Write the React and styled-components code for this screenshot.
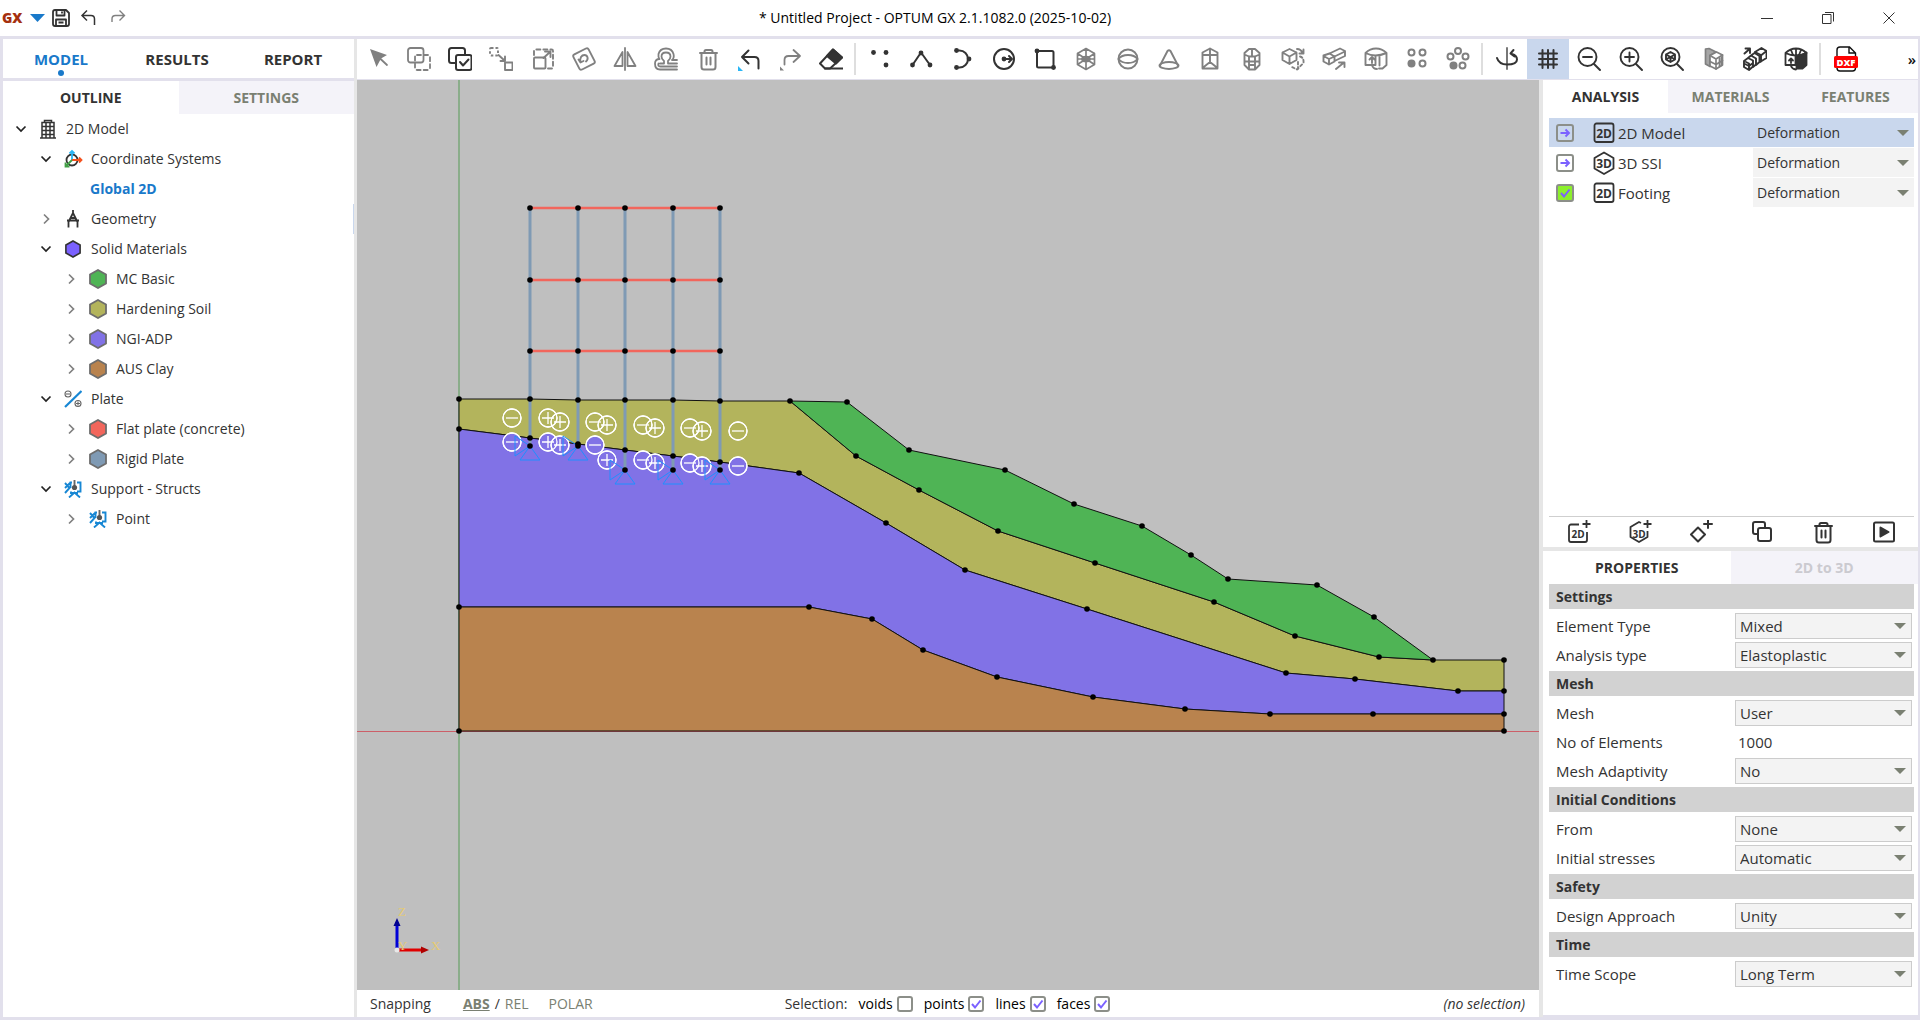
import React, { useState } from "react";
import styled, { createGlobalStyle, css } from "styled-components";

const c = {
  line: "#e2e0ec",
  split: "#e6e6e6",
  tab: "#f4f3f9",
  select: "#c9d7ed",
  ink: "#333333",
  gray: "#808080",
  olive: "#7a8072",
  blue: "#1979ca",
  violet: "#7b61ff",
  green: "#4fb455",
  yellow: "#b3b45c",
  purple: "#8172e6",
  brown: "#b9834e",
  red: "#f2665c",
  steel: "#7f9ab4",
};

const GlobalStyle = createGlobalStyle`
  *, *::before, *::after { box-sizing: border-box; }
  body { margin: 0; background: #fff; }
  body, button, input, select {
    font-family: "Open Sans", "Noto Sans", sans-serif;
    font-size: 15px;
    line-height: 20px;
    color: ${c.ink};
  }
  button { border: 0; padding: 0; background: none; cursor: pointer; }
`;

/* ---------- frame ---------- */

const Window = styled.div`
  display: flex;
  flex-direction: column;
  height: 100vh;
  min-height: 900px;
  min-width: 1500px;
`;

const TitleBar = styled.header`
  display: flex;
  align-items: center;
  height: 36px;
  flex: none;
`;

const QuickAccess = styled.div`
  display: flex;
  align-items: center;
  gap: 7px;
  min-width: 134px;
  padding: 0 2px;
`;

const Logo = styled.span`
  color: #a5300f;
  font-size: 14px;
  font-weight: 800;
`;

const IconButton = styled.button`
  display: grid;
  place-items: center;
  height: 30px;
  color: ${(p) => p.$color || c.ink};
  svg { display: block; }
`;

const QuickPair = styled.div`
  display: flex;
  gap: 14px;
  padding-left: 3px;
`;

const Title = styled.h1`
  flex: 1;
  margin: 0;
  text-align: center;
  font-size: 14px;
  font-weight: 400;
  color: #000;
`;

const WindowButtons = styled.div`
  display: grid;
  grid-template-columns: repeat(3, 61px);
  padding-right: 1px;
`;

const Body = styled.div`
  flex: 1;
  min-height: 0;
  display: grid;
  grid-template-columns: 351px 3px minmax(0, 1fr);
  padding: 3px 2px 3px 3px;
  background: ${c.line};
`;

const Splitter = styled.div`
  background: ${c.split};
`;

const SidePanel = styled.aside`
  background: #fff;
`;

const Work = styled.div`
  display: flex;
  flex-direction: column;
  min-width: 0;
  min-height: 0;
`;

const WorkRow = styled.div`
  flex: 1;
  min-height: 0;
  display: grid;
  grid-template-columns: minmax(0, 1fr) 4px 375px;
`;

const Center = styled.main`
  display: flex;
  flex-direction: column;
  min-height: 0;
`;

/* ---------- tabs ---------- */

const MainTabs = styled.div`
  display: grid;
  grid-template-columns: repeat(3, 1fr);
  padding-right: 3px;
  border-bottom: 3px solid ${c.line};
`;

const MainTab = styled.button`
  display: flex;
  flex-direction: column;
  align-items: center;
  justify-content: flex-end;
  height: 39px;
  padding-bottom: 2px;
  font-weight: 700;
  color: ${(p) => (p.$active ? c.blue : c.ink)};
  &::after {
    content: "";
    width: 6px;
    height: 6px;
    margin-top: 1px;
    border-radius: 50%;
    background: ${(p) => (p.$active ? c.blue : "transparent")};
  }
`;

const Tabs = styled.div`
  display: grid;
  grid-auto-flow: column;
  grid-auto-columns: 1fr;
`;

const Tab = styled.button`
  height: 33px;
  font-size: 14px;
  font-weight: 700;
  color: ${(p) => (p.$active ? c.ink : c.olive)};
  background: ${(p) => (p.$active ? "#fff" : c.tab)};
  &:disabled { color: #cbcad0; cursor: default; }
`;

/* ---------- outline tree ---------- */

const Tree = styled.ul`
  list-style: none;
  margin: 0;
  padding: 0;
`;

const TreeRow = styled.li`
  display: flex;
  align-items: center;
  height: 30px;
  padding-left: ${(p) => 10 + p.$level * 25}px;
  border-right: 1px solid ${(p) => (p.$marked ? c.select : "transparent")};
`;

const Chevron = styled.button`
  width: 16px;
  height: 20px;
  display: grid;
  place-items: center;
  color: ${(p) => (p.$open ? "#222" : c.gray)};
`;

const TreeIcon = styled.span`
  display: grid;
  place-items: center;
  width: 20px;
  margin: 0 7px 0 9px;
`;

const TreeLabel = styled.span`
  white-space: nowrap;
  font-size: 14px;
  padding-left: 1px;
  ${(p) =>
    p.$active &&
    css`
      padding-left: 52px;
      font-weight: 700;
      color: ${c.blue};
    `}
`;

/* ---------- toolbar ---------- */

const Toolbar = styled.div`
  display: flex;
  align-items: center;
  height: 41px;
  flex: none;
  background: #fff;
  border-bottom: 1px solid ${c.line};
`;

const ToolGroup = styled.div`
  display: grid;
  grid-template-columns: repeat(${(p) => p.$count}, 1fr);
  width: ${(p) => p.$width}px;
`;

const ToolButton = styled.button`
  display: grid;
  place-items: center;
  height: 40px;
  color: ${(p) => (p.$dim ? c.gray : c.ink)};
  background: ${(p) => (p.$active ? c.select : "none")};
`;

const Separator = styled.span`
  width: 2px;
  height: 32px;
  margin: 0 3px 0 2px;
  background: #dedede;
`;

const More = styled.button`
  margin-left: auto;
  width: 12px;
  font-weight: 600;
  color: #111;
`;

/* ---------- canvas and status ---------- */

const Viewport = styled.div`
  flex: 1;
  min-height: 0;
  background: #bfbfbf;
  overflow: hidden;
  svg { display: block; width: 100%; height: 100%; overflow: visible; }
`;

const StatusBar = styled.footer`
  display: grid;
  grid-template-columns: 1fr auto 1fr;
  align-items: center;
  height: 27px;
  flex: none;
  padding: 0 14px 0 13px;
  font-size: 14px;
  background: #fff;
`;

const StatusGroup = styled.div`
  display: flex;
  align-items: center;
  gap: ${(p) => p.$gap}px;
`;

const ModeButton = styled.button`
  font-size: 14px;
  color: ${c.olive};
  font-weight: ${(p) => (p.$active ? 700 : 400)};
  text-decoration: ${(p) => (p.$active ? "underline" : "none")};
`;

const CheckLabel = styled.label`
  display: flex;
  align-items: center;
  gap: 4px;
  color: #000;
`;

const CheckCell = styled.span`
  display: grid;
  place-items: center;
  justify-self: start;
  > * { grid-area: 1 / 1; }
  svg { pointer-events: none; }
`;

const CheckInput = styled.input`
  appearance: none;
  width: ${(p) => p.$size || 16}px;
  height: ${(p) => p.$size || 16}px;
  margin: 0;
  border: 2px solid #8c8f89;
  border-radius: 3px;
  background: ${(p) => p.$fill || "#fff"};
`;

const Hint = styled.em`
  justify-self: end;
  color: ${c.ink};
`;

/* ---------- right panel ---------- */

const RightPanel = styled.aside`
  display: flex;
  flex-direction: column;
  background: #fff;
  border-bottom: 2px solid ${c.line};
`;

const AnalysisList = styled.div`
  flex: none;
  height: 403px;
  padding: 5px 4px 0 6px;
`;

const AnalysisRow = styled.div`
  display: grid;
  grid-template-columns: 36px 24px 1fr 161px;
  align-items: center;
  height: 29px;
  margin-bottom: 1px;
  padding-left: 7px;
  background: ${(p) => (p.$active ? c.select : "transparent")};
`;

const AnalysisName = styled.span`
  padding-left: 2px;
`;

const SelectBox = styled.div`
  display: grid;
  grid-template-columns: 1fr 26px;
  align-items: center;
  height: ${(p) => (p.$plain ? 29 : 26)}px;
  border: ${(p) => (p.$plain ? "0" : "1px solid #cccccc")};
  background: ${(p) => (p.$active ? "transparent" : "#f3f3f3")};
  svg {
    grid-area: 1 / 2;
    justify-self: end;
    margin-right: 5px;
    pointer-events: none;
  }
`;

const SelectInput = styled.select`
  grid-area: 1 / 1 / 2 / 3;
  appearance: none;
  height: 100%;
  width: 100%;
  margin: 0;
  padding: 0 26px 0 4px;
  border: 0;
  border-radius: 0;
  background: transparent;
  font-size: ${(p) => (p.$plain ? 14 : 15)}px;
`;

const Actions = styled.div`
  display: grid;
  grid-template-columns: repeat(6, 1fr);
  height: 31px;
  margin: 0 4px 0 6px;
  border-top: 1px solid #cfcfcf;
`;

const Divider = styled.div`
  height: 4px;
  background: ${c.split};
`;

const Properties = styled.div`
  flex: 1;
  padding: 0 4px 0 6px;
`;

const SectionTitle = styled.h2`
  margin: 0;
  height: 25px;
  padding: 3px 7px 2px;
  font-size: 14px;
  font-weight: 700;
  background: #d2d2d2;
`;

const SectionBody = styled.div`
  padding: 2px 2px 2px 7px;
`;

const Field = styled.div`
  display: grid;
  grid-template-columns: 1fr 177px;
  align-items: center;
  height: 29px;
`;

const NumberInput = styled.input`
  width: 100%;
  border: 0;
  padding: 0 3px;
  background: transparent;
`;

/* ---------- drawings ---------- */

const Icon = ({ size = 24, w = 1.8, children }) => (
  <svg
    width={size}
    height={size}
    viewBox="0 0 24 24"
    fill="none"
    stroke="currentColor"
    strokeWidth={w}
    strokeLinecap="round"
    strokeLinejoin="round"
    aria-hidden="true"
  >
    {children}
  </svg>
);

const Dots = ({ at, r = 2.4 }) =>
  at.map(([x, y]) => <circle key={`${x},${y}`} cx={x} cy={y} r={r} fill="currentColor" stroke="none" />);

const Arrow = () => (
  <svg width="12" height="6" viewBox="0 0 12 6" aria-hidden="true">
    <path d="M0 0h12L6 6z" fill={c.olive} />
  </svg>
);

const Tick = () => (
  <svg width="12" height="12" viewBox="0 0 12 12" aria-hidden="true">
    <path d="M2 6l3 3.5L10.500 2.500" fill="none" stroke={c.violet} strokeWidth="2" />
  </svg>
);

const RunArrow = () => (
  <svg width="12" height="12" viewBox="0 0 12 12" aria-hidden="true">
    <path d="M1.500 6h8.500M6.500 2.500L10 6 6.500 9.500" fill="none" stroke={c.violet} strokeWidth="1.900" />
  </svg>
);

const Badge = ({ three, plus }) => (
  <svg width="24" height="24" viewBox="0 0 24 24" fill="none" stroke={c.ink} strokeWidth="1.8" aria-hidden="true">
    {three ? (
      <path d={plus ? "M13 3L11 2 2.500 7v10l8.500 5 8.500-5v-6" : "M12 1.500L21.500 7v10.500L12 23l-9.500-5.500V7z"} strokeLinejoin="round" />
    ) : plus ? (
      <path d="M12 4.500H4A2 2 0 0 0 2 6.500V20a2 2 0 0 0 2 2h14a2 2 0 0 0 2-2v-8" />
    ) : (
      <rect x="2.500" y="2.500" width="19" height="18.500" rx="2" />
    )}
    <text
      x={plus ? 11 : 12}
      y={plus ? 17.5 : 16.5}
      textAnchor="middle"
      fontFamily="Open Sans, sans-serif"
      fontSize={plus ? 10 : 12}
      fontWeight="700"
      fill={c.ink}
      stroke="none"
    >
      {three ? "3D" : "2D"}
    </text>
    {plus && <path d="M15.500 4h8M19.500 0v8" />}
  </svg>
);

const Trash = () => (
  <Icon w={2}>
    <path d="M4 6h17M8.500 6V4.500Q8.500 3 10 3h5q1.500 0 1.500 1.500V6M5.500 6v14q0 2.500 2.500 2.500h9q2.500 0 2.500-2.500V6M10.500 10.500v7M14.500 10.500v7" />
  </Icon>
);

const Magnifier = ({ children }) => (
  <Icon w={1.9}>
    <circle cx="10.500" cy="10" r="9" />
    <path d="M17 17l6 6" />
    {children}
  </Icon>
);

const glyphs = {
  pointer: (
    <Icon>
      <path d="M4 2l17 6-6 3.500L10.500 20z" fill="currentColor" stroke="none" />
      <path d="M13 10.500l8 7.500" />
    </Icon>
  ),
  duplicate: (
    <Icon>
      <rect x="1" y="1" width="15.500" height="14.500" rx="2.500" />
      <rect x="8" y="8" width="15" height="15" rx="2" strokeDasharray="4 3" />
    </Icon>
  ),
  selectCopy: (
    <Icon w={2}>
      <rect x="1" y="1" width="16" height="15" rx="2.500" />
      <rect x="8" y="8" width="15.500" height="15" rx="2" fill="#fff" />
      <path d="M12 15l3 3.500 5.500-6" />
    </Icon>
  ),
  move: (
    <Icon w={1.9}>
      <rect x="1" y="1" width="8" height="7.500" rx="1" strokeDasharray="2.500 2" strokeLinecap="butt" />
      <path d="M9.500 8l6.500 6M16 9.500V14h-4.500" />
      <rect x="16" y="15.500" width="7.500" height="7.500" />
    </Icon>
  ),
  scale: (
    <Icon w={1.9}>
      <rect x="3" y="10.500" width="11.500" height="11" rx="1" />
      <path d="M3 8V4q0-1.500 1.500-1.500h16Q22 2.500 22 4v16q0 1.500-1.500 1.500H17" strokeDasharray="4 3" />
      <path d="M12.500 11l7-6.500M14 4.500h5.500V10" />
    </Icon>
  ),
  rotate: (
    <Icon w={1.9}>
      <rect x="3.500" y="3.500" width="17" height="17" rx="2" transform="rotate(-27 12 12)" />
      <path d="M8.500 15c-1-4 1-7 4-7s4.500 4 1.500 6.500M6.500 12.500l2 3 3-1.500" />
    </Icon>
  ),
  mirror: (
    <Icon w={1.8}>
      <path d="M12 1v22M9.500 5v14H1.500zM14.500 5v14h8z" />
    </Icon>
  ),
  offset: (
    <Icon w={1.8}>
      <path d="M23 13h-5q2.500-2 1.500-6Q18 1.500 12 1.500T4.500 7q-.5 3 1 5-4.500 0-4.500 4.500Q1 22.500 6 22.500h17" />
      <path d="M23 16.500h-9v-2.500q2.500-2 2.500-4.500 0-4-4.500-4T7.500 9.500q0 2.500 2.500 4.500v2.500H6M4.500 16.500q-1 3 2 3H23" />
    </Icon>
  ),
  trash: <Trash />,
  undo: (
    <Icon w={2}>
      <path d="M21.500 21.500V14q0-4-4-4H5M11.500 3.500L5 10l6.500 6.500" />
      <path d="M1 19v5h5z" fill="#29b6f6" stroke="none" />
    </Icon>
  ),
  redo: (
    <Icon>
      <path d="M6.500 17.500v-4.500q0-4 4-4H22M15.500 3L22 9l-6.500 6" />
      <path d="M2 19.500v4h4z" fill="currentColor" stroke="none" />
    </Icon>
  ),
  eraser: (
    <Icon w={2}>
      <path d="M1 16.500L14 2.500l9 8-12 11H6z" />
      <path d="M8 9l6-6.500 9 8-6 6z" fill="currentColor" />
      <path d="M6 21.500h17.500" />
    </Icon>
  ),
  points: (
    <Icon>
      <Dots at={[[5.5, 5.5], [18, 5.5], [18, 18]]} />
    </Icon>
  ),
  polyline: (
    <Icon w={2}>
      <path d="M3.500 18L12 5.500 21 18" />
      <Dots at={[[3.5, 18], [12, 6], [21, 18]]} />
    </Icon>
  ),
  arc: (
    <Icon w={2}>
      <path d="M6.500 3.500h3a8.500 8.500 0 0 1 0 17h-3" />
      <Dots at={[[6.5, 3.5], [19, 12], [6.5, 20.5]]} />
    </Icon>
  ),
  circle: (
    <Icon w={2}>
      <circle cx="12" cy="12" r="10" />
      <path d="M12 12h7.500M17 9l3 3-3 3" />
      <Dots at={[[12, 12]]} />
    </Icon>
  ),
  rect: (
    <Icon w={2}>
      <rect x="4" y="4" width="16.500" height="16.500" rx="1.500" />
      <Dots at={[[4, 4], [20.5, 20.5]]} />
    </Icon>
  ),
  icosa: (
    <Icon w={1.7}>
      <path d="M12 1.500l8.500 5v11l-8.500 5-8.500-5v-11zM12 1.500v21M3.500 6.500l17 11M20.500 6.500l-17 11M4 12h16" />
      <ellipse cx="12" cy="12" rx="4" ry="2.500" />
    </Icon>
  ),
  sphere: (
    <Icon w={1.9}>
      <circle cx="12" cy="12" r="9.500" />
      <path d="M2.500 12q3-4 9.500-4t9.500 4q-3 4-9.500 4t-9.500-4z" />
    </Icon>
  ),
  cone: (
    <Icon w={1.9}>
      <path d="M3 18.500L10.500 4Q12 2.500 13.500 4L21 18.500" />
      <ellipse cx="12" cy="18.500" rx="9.500" ry="3.500" />
    </Icon>
  ),
  prism: (
    <Icon w={1.9}>
      <path d="M4.500 5.500L12 1.500l7.500 4V21.500h-15zM12 1.500V15M4.500 8h15M4.500 21l7.500-6 7.500 6" />
    </Icon>
  ),
  column: (
    <Icon w={1.9}>
      <path d="M4.500 6L9 2h6l4.500 4v12L15 22.500H9L4.500 18zM4.500 7.500L9 9.500h6l4.500-2M9 9.500v13M15 9.500v13M12 2v7M4.500 14.500h15M9 18h6" />
    </Icon>
  ),
  cubeRotate: (
    <Icon w={1.9}>
      <path d="M8.500 2l7 3.500v7.500l-7 4-7-4V5.500zM1.500 5.500l7 4 7-4M8.500 9.500V17M16 2q4 0 5.500 4M22.500 2.500v4h-4" />
      <path d="M19 9.500q4 1 3.500 6.500L16 22.500l-6-3M17 15v7" strokeDasharray="2.5 2.5" />
    </Icon>
  ),
  extrude: (
    <Icon w={1.9}>
      <path d="M1.500 8.500l6-2 5 3v5l-5.500 3-5.500-3zM1.500 9l5.500 3 5.500-2.500M7 12v5.500M7.500 6.500L18 1.500l5 2.500v5L12.500 14M12.500 9.500L23 4.500M14 22l8-6.500M17 15.500h5.500V20" />
    </Icon>
  ),
  revolve: (
    <Icon w={1.9}>
      <path d="M1.500 6v12h10V8.500M1.500 6Q6 1.500 12 1.500T22.500 6v12l-4 3.500h-3.500M1.500 6q5 2.500 10 2.500T22.500 6M15.500 8.500v10M8 16v-5.500M5.500 12.500L8 10l2.500 2.500M8 18q1 4 5 4" />
    </Icon>
  ),
  gridArray: (
    <Icon w={2}>
      <circle cx="6.500" cy="5.500" r="3" />
      <circle cx="17.500" cy="5.500" r="3" />
      <circle cx="17.500" cy="16.500" r="3" />
      <Dots at={[[6.5, 16.5]]} r={4} />
    </Icon>
  ),
  ringArray: (
    <Icon w={2}>
      <circle cx="12" cy="4" r="3" />
      <circle cx="4.500" cy="9.500" r="3" />
      <circle cx="19.500" cy="9.500" r="3" />
      <circle cx="16.500" cy="18.500" r="3" />
      <Dots at={[[7.5, 18.5]]} r={4} />
    </Icon>
  ),
  orbit: (
    <Icon w={2}>
      <path d="M12 1v21" stroke="#777" />
      <path d="M2 11q2 6.500 10 6.500 10 0 10-5 0-4-5-5.500M18.500 3L15.500 6.500l4 3" />
    </Icon>
  ),
  grid: (
    <Icon w={2}>
      <path d="M6.500 3v18M12 3v18M17.500 3v18M3 6.500h18M3 12h18M3 17.500h18" />
    </Icon>
  ),
  zoomOut: (
    <Magnifier>
      <path d="M6 10h9" />
    </Magnifier>
  ),
  zoomIn: (
    <Magnifier>
      <path d="M6 10h9M10.500 5.500v9" />
    </Magnifier>
  ),
  zoomFit: (
    <Magnifier>
      <path d="M10.500 5l4.500 2.500v5L10.500 15 6 12.500v-5zM6 7.500l4.500 2.500L15 7.500M10.500 10v5M7.500 11.500l3-1.500 3 1.500" />
    </Magnifier>
  ),
  slice: (
    <Icon w={1.7}>
      <path d="M3.500 2v15l4.500 2.500V8.500L14 5 7 1.500z" fill="currentColor" fillOpacity="0.700" />
      <path d="M8 8.500L14.500 5l6 3v10L14 22l-6-3z" fill="#fff" />
      <path d="M8 8.500l6 3.500 6.500-4M14 12v10M8 14.500l6 3 6.500-4" />
      <path d="M17.500 11v8.500M19.500 10v8.500" />
    </Icon>
  ),
  extrudeSolid: (
    <Icon w={1.9}>
      <path d="M12 5l6.500-4 5 3v7l-6.500 4M18.500 8L23.500 4M12 5l6 3v6.500" />
      <path d="M1 14l4-3 5 2.500v6L6 23l-5-3zM5 11l3-2.500 5 3v6L10 20M8 8.500L11.500 6l5 3v6L13 18M3 15l3 1.500V22M1.500 6.500L6 2.500M2.500 1.500H7v4.500M2 17l4 2 4-3" />
    </Icon>
  ),
  revolveSolid: (
    <Icon w={1.8}>
      <path d="M12.500 9q5 0 10-3.500v12.500l-4 3.500h-6z" fill="currentColor" />
      <path d="M1.500 6v12h10V8.500M1.500 6Q6 1.500 12 1.500T22.500 6M1.500 6q5 2.500 10 2.500T22.500 6M7 3l2 5M12 1.500v7M17 3l-2 5M7 16v-4M5 13.500L7 11.500l2 2M7 19q1 3 5 3.500" />
    </Icon>
  ),
  dxf: (
    <svg width="26" height="26" viewBox="0 0 26 26" aria-hidden="true">
      <path d="M4 10V4q0-3 3-3h9.500l6 6v3M4 20v2q0 3 3 3h12.500q3 0 3-3v-2M16 1v6h6" fill="none" stroke="#111" strokeWidth="1.400" />
      <rect x="1" y="10" width="24" height="12" rx="1.500" fill="#ff0000" />
      <text x="13" y="19.500" textAnchor="middle" fontFamily="Open Sans, sans-serif" fontSize="9.500" fontWeight="800" fill="#fff">
        DXF
      </text>
    </svg>
  ),
};

const Hexagon = ({ fill, small }) => (
  <svg width={small ? 16 : 18} height={small ? 18 : 20} viewBox="0 0 18 20" aria-hidden="true">
    <path d="M9 1l8 4.500v9L9 19l-8-4.500v-9z" fill={fill} stroke={small ? "#333" : "#6d6d6d"} strokeWidth="1.800" />
  </svg>
);

const SupportIcon = () => (
  <svg width="18" height="18" viewBox="0 0 18 18" fill="none" stroke="#1787d4" strokeWidth="1.900" aria-hidden="true">
    <path d="M1 3l4.500 5L1 13M6 3L1 8M8 2.500H6.500V8M13 2.500h3.500v9H13M5 17.500l5.500-5 5.500 5M7 11.500V13h7" />
    <path d="M10.500 0v6" stroke="#666" />
    <circle cx="10.500" cy="7.500" r="2.600" fill="#555" stroke="none" />
  </svg>
);

const treeGlyphs = {
  building: (
    <svg width="16" height="20" viewBox="0 0 16 20" fill="none" stroke={c.ink} strokeWidth="1.500" aria-hidden="true">
      <path d="M2 19V3.500h2.500V1.500h7v2H14V19M0 19h16M2 7.500h12M2 11.500h12M2 15.500h12M6 3.500V19M10 3.500V19M4 3.500h8" />
    </svg>
  ),
  axes: (
    <svg width="20" height="20" viewBox="0 0 20 20" fill="none" strokeWidth="1.800" aria-hidden="true">
      <circle cx="9" cy="11" r="5.500" stroke={c.ink} />
      <path d="M9 11V3M6.500 4.500L9 2l2.500 2.500" stroke="#29b6f6" />
      <path d="M9 11h9M16 8.500l2.500 2.500-2.500 2.500" stroke="#f4511e" />
      <path d="M9 11l-6.500 6.500M2.500 13.500v4h4" stroke="#43a047" />
    </svg>
  ),
  compass: (
    <svg width="14" height="18" viewBox="0 0 14 18" fill="none" stroke={c.ink} strokeWidth="1.800" aria-hidden="true">
      <path d="M7 0v3M7 3L2.500 12v5.500M7 3l4.500 9v5.500M1 10.500h12M5 8h4" />
    </svg>
  ),
  plate: (
    <svg width="18" height="18" viewBox="0 0 18 18" fill="none" stroke="#666" strokeWidth="1.100" aria-hidden="true">
      <path d="M1 17L17.500 1" stroke="#1787d4" strokeWidth="2.200" />
      <circle cx="4" cy="4" r="3" />
      <path d="M2 4h4" />
      <circle cx="14" cy="13.500" r="3" />
      <path d="M12 13.500h4M14 11.500v4" />
    </svg>
  ),
  support: <SupportIcon />,
};

/* ---------- data ---------- */

const tree = [
  { level: 0, open: true, icon: treeGlyphs.building, label: "2D Model" },
  { level: 1, open: true, icon: treeGlyphs.axes, label: "Coordinate Systems" },
  { level: 1, label: "Global 2D", active: true },
  { level: 1, open: false, icon: treeGlyphs.compass, label: "Geometry", marked: true },
  { level: 1, open: true, icon: <Hexagon fill={c.violet} small />, label: "Solid Materials" },
  { level: 2, open: false, icon: <Hexagon fill={c.green} />, label: "MC Basic" },
  { level: 2, open: false, icon: <Hexagon fill={c.yellow} />, label: "Hardening Soil" },
  { level: 2, open: false, icon: <Hexagon fill={c.purple} />, label: "NGI-ADP" },
  { level: 2, open: false, icon: <Hexagon fill={c.brown} />, label: "AUS Clay" },
  { level: 1, open: true, icon: treeGlyphs.plate, label: "Plate" },
  { level: 2, open: false, icon: <Hexagon fill={c.red} />, label: "Flat plate (concrete)" },
  { level: 2, open: false, icon: <Hexagon fill={c.steel} />, label: "Rigid Plate" },
  { level: 1, open: true, icon: treeGlyphs.support, label: "Support - Structs" },
  { level: 2, open: false, icon: treeGlyphs.support, label: "Point" },
];

const dimTools = new Set([
  "pointer", "duplicate", "move", "scale", "rotate", "mirror", "offset", "trash", "redo",
  "icosa", "sphere", "cone", "prism", "column", "cubeRotate", "extrude", "revolve", "gridArray", "ringArray", "slice",
]);

const toolGroups = [
  { width: 495, tools: ["pointer", "duplicate", "selectCopy", "move", "scale", "rotate", "mirror", "offset", "trash", "undo", "redo", "eraser"] },
  { width: 620, tools: ["points", "polyline", "arc", "circle", "rect", "icosa", "sphere", "cone", "prism", "column", "cubeRotate", "extrude", "revolve", "gridArray", "ringArray"] },
  { width: 331, tools: ["orbit", "grid", "zoomOut", "zoomIn", "zoomFit", "slice", "extrudeSolid", "revolveSolid"] },
  { width: 44, tools: ["dxf"] },
];

const analyses = [
  { name: "2D Model", active: true },
  { name: "3D SSI", three: true },
  { name: "Footing", done: true },
];

const sections = [
  { title: "Settings", fields: [["Element Type", "Mixed"], ["Analysis type", "Elastoplastic"]] },
  { title: "Mesh", fields: [["Mesh", "User"], ["No of Elements", "1000", true], ["Mesh Adaptivity", "No"]] },
  { title: "Initial Conditions", fields: [["From", "None"], ["Initial stresses", "Automatic"]] },
  { title: "Safety", fields: [["Design Approach", "Unity"]] },
  { title: "Time", fields: [["Time Scope", "Long Term"]] },
];

/* Terrain layers, in drawing units of the view */
const crest = [[459, 399], [530, 399], [578, 400], [625, 400], [673, 400], [720, 401], [790, 401]];
const slopeTop = [
  [790, 401], [847, 402], [909, 450], [1005, 470], [1074, 504], [1142, 526], [1191, 555],
  [1228, 579], [1317, 585], [1374, 617], [1433, 660],
];
const slopeBase = [
  [1433, 660], [1379, 657], [1295, 636], [1214, 602], [1095, 563], [998, 531], [919, 490], [856, 456], [790, 401],
];
const clayTop = [
  [459, 429], [530, 438], [578, 444], [625, 450], [673, 456], [720, 462], [799, 473], [886, 523], [965, 570],
  [1087, 609], [1286, 673], [1355, 679], [1458, 691], [1504, 691],
];
const bedTop = [
  [459, 607], [809, 607], [872, 619], [923, 650], [997, 677], [1093, 697], [1185, 709], [1270, 714], [1373, 714], [1504, 714],
];
const edge = [[1504, 660]];
const floor = [[1504, 731], [459, 731]];

const columns = [[530, 446], [578, 446], [625, 470], [673, 470], [720, 470]];
const storeys = [208, 280, 351];

const signs = [
  [512, 418, "-"], [548, 418, "+"], [560, 422, "+"], [595, 422, "-"], [607, 425, "+"], [643, 425, "-"],
  [655, 428, "+"], [690, 428, "-"], [702, 431, "+"], [738, 431, "-"],
  [512, 442, "-", 1], [548, 442, "+", 1], [560, 445, "+", 1], [595, 445, "-", 1], [607, 460, "+", 1],
  [643, 460, "-", 1], [655, 463, "+", 1], [690, 463, "-", 1], [702, 466, "+", 1], [738, 466, "-", 1],
];

const pts = (list) => list.map((p) => p.join(",")).join(" ");

const Layer = ({ points, fill }) => (
  <polygon points={pts(points)} fill={fill} stroke="#111" strokeWidth="1" />
);

const Scene = () => (
  <svg viewBox="357 80 1182 910" fill="none" preserveAspectRatio="xMidYMid meet" role="img" aria-label="Slope model with frame structure">
    <path d="M459 -2000V3000" stroke="#8aad8a" strokeWidth="2" />
    <path d="M-2000 731.500H4000" stroke="#cc5f68" strokeWidth="1" />
    <Layer fill={c.yellow} points={[...crest, ...slopeBase.slice(0, -1).reverse(), ...edge, ...clayTop.slice().reverse()]} />
    <Layer fill={c.green} points={[...slopeTop, ...slopeBase.slice(1, -1)]} />
    <Layer fill={c.purple} points={[...clayTop, ...bedTop.slice().reverse()]} />
    <Layer fill={c.brown} points={[...bedTop, ...floor]} />
    {storeys.map((y) => (
      <path key={y} d={`M530 ${y}H720`} stroke={c.red} strokeWidth="2.500" />
    ))}
    {columns.map(([x, y]) => (
      <path key={x} d={`M${x} 208V${y}`} stroke={c.steel} strokeWidth="3" />
    ))}
    {signs.map(([x, y, sign, low]) => (
      <circle key={`${x}-${y}`} cx={x} cy={y} r="9" stroke="#fff" strokeWidth="1.300" fill={low ? c.purple : "none"} />
    ))}
    {signs.map(([x, y, sign]) => (
      <g key={`${x}-${y}`} stroke="#fff" strokeWidth="1.300">
        <circle cx={x} cy={y} r="9" />
        <path d={sign === "+" ? `M${x - 6} ${y}h12M${x} ${y - 6}v12` : `M${x - 6} ${y}h12`} />
      </g>
    ))}
    {columns.map(([x, y]) => (
      <path key={x} d={`M${x} ${y}l10 14h-20zM${x} ${y}l-15-10v20z`} stroke="#1e90ff" strokeWidth="1" />
    ))}
    {[
      ...crest, ...slopeTop.slice(1), ...slopeBase.slice(1, -1), ...clayTop, ...bedTop, ...edge, ...floor,
      ...columns, ...storeys.flatMap((y) => columns.map(([x]) => [x, y])),
    ].map(([x, y]) => (
      <circle key={`${x}-${y}`} cx={x} cy={y} r="2.800" fill="#000" />
    ))}
    <path d="M397 950V922" stroke="#0000d8" strokeWidth="3" />
    <path d="M397 918l3.500 8h-7z" fill="#000090" />
    <path d="M397 950h26" stroke="#e00000" strokeWidth="3" />
    <path d="M429 950l-8-3.500v7z" fill="#b00000" />
    <circle cx="397" cy="950" r="2.500" fill="#e8e8e8" />
    <g fill="#e6cb72" fontFamily="Liberation Serif, serif" fontSize="13">
      <text x="398" y="916">Z</text>
      <text x="398" y="950">Y</text>
      <text x="431" y="950">X</text>
    </g>
  </svg>
);

/* ---------- parts ---------- */

const Dropdown = ({ id, value, plain, active }) => (
  <SelectBox $plain={plain} $active={active}>
    <SelectInput id={id} $plain={plain} aria-label={plain ? "Analysis kind" : undefined} defaultValue={value}>
      <option>{value}</option>
    </SelectInput>
    <Arrow />
  </SelectBox>
);

const Check = ({ label, initial }) => {
  const [on, setOn] = useState(initial);
  return (
    <CheckLabel>
      {label}
      <CheckCell>
        <CheckInput type="checkbox" checked={on} onChange={() => setOn(!on)} />
        {on && <Tick />}
      </CheckCell>
    </CheckLabel>
  );
};

const Outline = () => (
  <SidePanel>
    <MainTabs>
      <MainTab $active>MODEL</MainTab>
      <MainTab>RESULTS</MainTab>
      <MainTab>REPORT</MainTab>
    </MainTabs>
    <Tabs>
      <Tab $active>OUTLINE</Tab>
      <Tab>SETTINGS</Tab>
    </Tabs>
    <Tree>
      {tree.map((n) => (
        <TreeRow key={n.label} $level={n.level} $marked={n.marked}>
          {n.icon && (
            <>
              <Chevron $open={n.open} aria-label={`Toggle ${n.label}`}>
                <svg width="12" height="12" viewBox="0 0 12 12" fill="none" stroke="currentColor" strokeWidth="1.700">
                  <path d={n.open ? "M1.500 3.500L6 8l4.500-4.500" : "M4 1.500L8.500 6 4 10.500"} />
                </svg>
              </Chevron>
              <TreeIcon>{n.icon}</TreeIcon>
            </>
          )}
          <TreeLabel $active={n.active}>{n.label}</TreeLabel>
        </TreeRow>
      ))}
    </Tree>
  </SidePanel>
);

const Tools = () => (
  <Toolbar>
    {toolGroups.map((g, i) => (
      <React.Fragment key={g.width}>
        {i > 0 && <Separator />}
        <ToolGroup $count={g.tools.length} $width={g.width}>
          {g.tools.map((t) => (
            <ToolButton key={t} aria-label={t} $dim={dimTools.has(t)} $active={t === "grid"}>
              {glyphs[t]}
            </ToolButton>
          ))}
        </ToolGroup>
      </React.Fragment>
    ))}
    <More>»</More>
  </Toolbar>
);

const Inspector = () => (
  <RightPanel>
    <Tabs>
      <Tab $active>ANALYSIS</Tab>
      <Tab>MATERIALS</Tab>
      <Tab>FEATURES</Tab>
    </Tabs>
    <AnalysisList>
      {analyses.map((a) => (
        <AnalysisRow key={a.name} $active={a.active}>
          <CheckCell>
            <CheckInput
              type="checkbox"
              aria-label={`Run ${a.name}`}
              $size={18}
              $fill={a.done ? "#8cf02c" : "transparent"}
            />
            {a.done ? <Tick /> : <RunArrow />}
          </CheckCell>
          <Badge three={a.three} />
          <AnalysisName>{a.name}</AnalysisName>
          <Dropdown plain active={a.active} value="Deformation" />
        </AnalysisRow>
      ))}
    </AnalysisList>
    <Actions>
      <IconButton aria-label="Add 2D model"><Badge plus /></IconButton>
      <IconButton aria-label="Add 3D model"><Badge three plus /></IconButton>
      <IconButton aria-label="Add stage">
        <Icon w={2}>
          <path d="M9 7.500l7 7-7 7-7-7zM15 4h8M19 0v8" />
        </Icon>
      </IconButton>
      <IconButton aria-label="Copy">
        <Icon w={2}>
          <path d="M7 14H5q-2 0-2-2V4q0-2 2-2h8q2 0 2 2v3" />
          <rect x="8" y="8" width="13" height="13" rx="2" />
        </Icon>
      </IconButton>
      <IconButton aria-label="Delete"><Trash /></IconButton>
      <IconButton aria-label="Run">
        <Icon w={2}>
          <rect x="2" y="2.500" width="20" height="19" rx="1.500" />
          <path d="M8.500 7.500l8 4.500-8 4.500z" fill="currentColor" />
        </Icon>
      </IconButton>
    </Actions>
    <Divider />
    <Tabs>
      <Tab $active>PROPERTIES</Tab>
      <Tab disabled>2D to 3D</Tab>
    </Tabs>
    <Properties>
      {sections.map((s) => (
        <section key={s.title}>
          <SectionTitle>{s.title}</SectionTitle>
          <SectionBody>
            {s.fields.map(([label, value, plain]) => (
              <Field key={label}>
                <label htmlFor={label}>{label}</label>
                {plain ? <NumberInput id={label} defaultValue={value} /> : <Dropdown id={label} value={value} />}
              </Field>
            ))}
          </SectionBody>
        </section>
      ))}
    </Properties>
  </RightPanel>
);

export default function App() {
  return (
    <Window>
      <GlobalStyle />
      <TitleBar>
        <QuickAccess>
          <Logo>GX</Logo>
          <IconButton aria-label="Menu">
            <svg width="15" height="8" viewBox="0 0 15 8"><path d="M0 0h15L7.500 8z" fill={c.blue} /></svg>
          </IconButton>
          <IconButton aria-label="Save">
            <svg width="18" height="18" viewBox="0 0 18 18" fill="none" stroke="currentColor" strokeWidth="1.800" strokeLinejoin="round">
              <path d="M1 3q0-2 2-2h11l3 3v11q0 2-2 2H3q-2 0-2-2zM4.500 1v5.500h8V1M10 2.500v2M4 17v-6.500h10V17M6.500 13.500h5" />
            </svg>
          </IconButton>
          <QuickPair>
            <IconButton aria-label="Undo">
              <svg width="16" height="18" viewBox="0 0 16 18" fill="none" stroke="currentColor" strokeWidth="1.500">
                <path d="M14.500 16v-6q0-3.500-3.500-3.500H2M7 1.500l-5 5 5 5" />
              </svg>
            </IconButton>
            <IconButton aria-label="Redo" $color={c.gray}>
              <svg width="16" height="18" viewBox="0 0 16 18" fill="none" stroke="currentColor" strokeWidth="1.400">
                <path d="M2 13v-3q0-3.500 3.500-3.500H14M9.500 1.500l5 5-5 5" />
              </svg>
            </IconButton>
          </QuickPair>
        </QuickAccess>
        <Title>* Untitled Project - OPTUM GX 2.1.1082.0 (2025-10-02)</Title>
        <WindowButtons>
          <IconButton aria-label="Minimize">
            <svg width="12" height="12" viewBox="0 0 12 12" stroke="currentColor"><path d="M0 6.500h12" /></svg>
          </IconButton>
          <IconButton aria-label="Restore">
            <svg width="12" height="12" viewBox="0 0 12 12" fill="none" stroke="currentColor">
              <path d="M.5 2.500h8.500v9H.5zM3 .5h8.500v9" />
            </svg>
          </IconButton>
          <IconButton aria-label="Close">
            <svg width="12" height="12" viewBox="0 0 12 12" stroke="currentColor"><path d="M.5.5l11 11M11.500.5l-11 11" /></svg>
          </IconButton>
        </WindowButtons>
      </TitleBar>
      <Body>
        <Outline />
        <Splitter />
        <Work>
          <Tools />
          <WorkRow>
            <Center>
              <Viewport>
                <Scene />
              </Viewport>
              <StatusBar>
                <StatusGroup $gap={32}>
                  <span>Snapping</span>
                  <StatusGroup $gap={20}>
                    <StatusGroup $gap={5}>
                      <ModeButton $active>ABS</ModeButton>/<ModeButton>REL</ModeButton>
                    </StatusGroup>
                    <ModeButton>POLAR</ModeButton>
                  </StatusGroup>
                </StatusGroup>
                <StatusGroup $gap={11}>
                  <span>Selection:</span>
                  <Check label="voids" initial={false} />
                  <Check label="points" initial />
                  <Check label="lines" initial />
                  <Check label="faces" initial />
                </StatusGroup>
                <Hint>(no selection)</Hint>
              </StatusBar>
            </Center>
            <Splitter />
            <Inspector />
          </WorkRow>
        </Work>
      </Body>
    </Window>
  );
}
